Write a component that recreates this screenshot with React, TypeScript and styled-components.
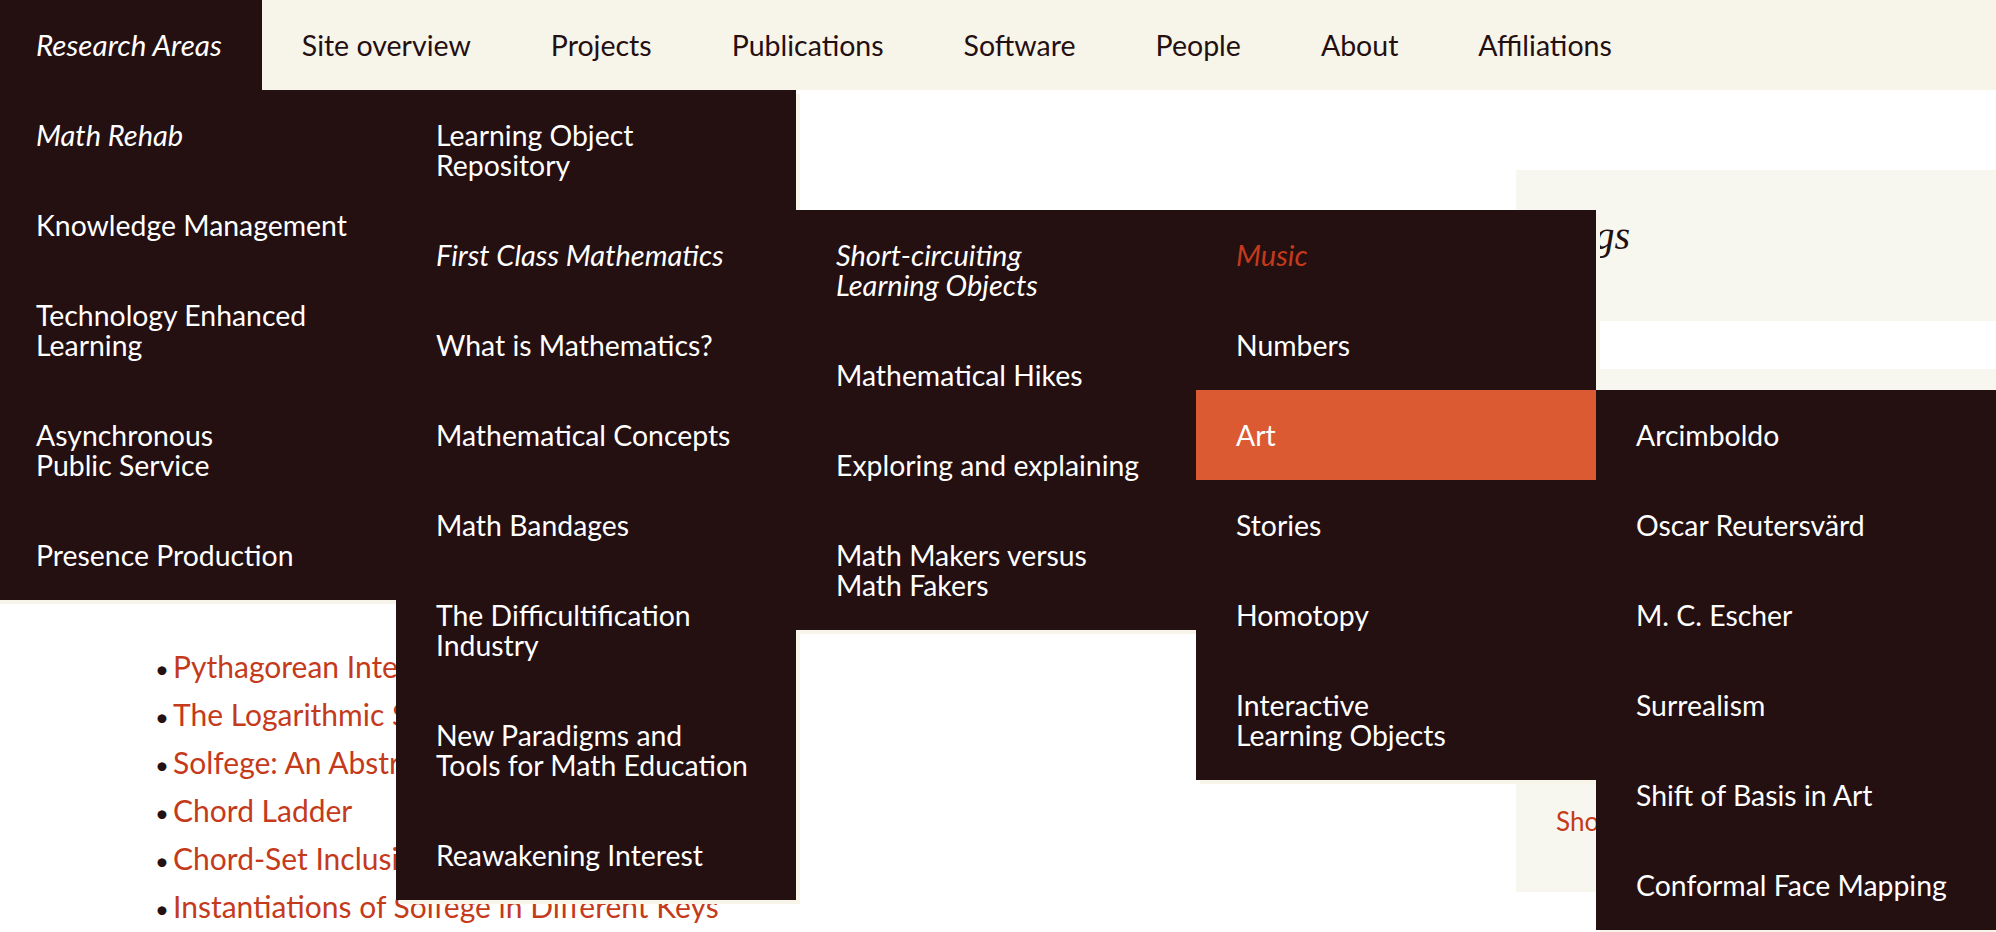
import React from "react";
import styled, { createGlobalStyle } from "styled-components";

const DARK = "#240f11";
const CREAM = "#f7f5ea";
const SIDE_CREAM = "#f8f7ef";
const ORANGE = "#dc5a32";
const LINK = "#c43a1b";

const GlobalStyle = createGlobalStyle`
  html, body {
    margin: 0;
    padding: 0;
    overflow: hidden;
    background: #ffffff;
  }
  body {
    font-family: Lato, "Open Sans", "Noto Sans", sans-serif;
    color: ${DARK};
  }
  * { box-sizing: border-box; }
`;

type Item = {
  label: string[];
  italic?: boolean;
  current?: boolean;
  hover?: boolean;
  children?: Item[];
};

const artItems: Item[] = [
  { label: ["Arcimboldo"] },
  { label: ["Oscar Reutersvärd"] },
  { label: ["M. C. Escher"] },
  { label: ["Surrealism"] },
  { label: ["Shift of Basis in Art"] },
  { label: ["Conformal Face Mapping"] },
];

const shortCircuitItems: Item[] = [
  { label: ["Music"], italic: true, current: true },
  { label: ["Numbers"] },
  { label: ["Art"], hover: true, children: artItems },
  { label: ["Stories"] },
  { label: ["Homotopy"] },
  { label: ["Interactive", "Learning Objects"] },
];

const firstClassItems: Item[] = [
  { label: ["Short-circuiting", "Learning Objects"], italic: true, children: shortCircuitItems },
  { label: ["Mathematical Hikes"] },
  { label: ["Exploring and explaining"] },
  { label: ["Math Makers versus", "Math Fakers"] },
];

const mathRehabItems: Item[] = [
  { label: ["Learning Object", "Repository"] },
  { label: ["First Class Mathematics"], italic: true, children: firstClassItems },
  { label: ["What is Mathematics?"] },
  { label: ["Mathematical Concepts"] },
  { label: ["Math Bandages"] },
  { label: ["The Difficultification", "Industry"] },
  { label: ["New Paradigms and", "Tools for Math Education"] },
  { label: ["Reawakening Interest"] },
];

const researchItems: Item[] = [
  { label: ["Math Rehab"], italic: true, children: mathRehabItems },
  { label: ["Knowledge Management"] },
  { label: ["Technology Enhanced", "Learning"] },
  { label: ["Asynchronous", "Public Service"] },
  { label: ["Presence Production"] },
];

const navItems = [
  "Site overview",
  "Projects",
  "Publications",
  "Software",
  "People",
  "About",
  "Affiliations",
];

const listLinks = [
  "Pythagorean Intervals",
  "The Logarithmic Scale",
  "Solfege: An Abstraction",
  "Chord Ladder",
  "Chord-Set Inclusion",
  "Instantiations of Solfege in Different Keys",
];

/* ---------- Page ---------- */

const Page = styled.div`
  position: relative;
  width: 1996px;
  height: 932px;
  overflow: hidden;
  background: #ffffff;
`;

/* ---------- Navigation ---------- */

const NavBar = styled.nav`
  position: relative;
  z-index: 10;
  height: 90px;
  background: ${CREAM};
`;

const NavList = styled.ul`
  display: flex;
  margin: 0 0 0 -4px;
  padding: 0;
  list-style: none;
  height: 90px;
`;

const NavItem = styled.li<{ $active?: boolean }>`
  position: relative;
  display: block;
  padding: 30px 40px;
  font-size: ${(p) => (p.$active ? "29.6px" : "28.5px")};
  line-height: 30px;
  white-space: nowrap;
  cursor: pointer;
  color: ${(p) => (p.$active ? "#ffffff" : DARK)};
  background: ${(p) => (p.$active ? DARK : "transparent")};
  font-style: ${(p) => (p.$active ? "italic" : "normal")};
`;

const Panel = styled.ul<{ $root?: boolean }>`
  position: absolute;
  top: ${(p) => (p.$root ? "100%" : "0")};
  left: ${(p) => (p.$root ? "0" : "100%")};
  width: 400px;
  margin: 0;
  padding: 0;
  list-style: none;
  font-style: normal;
  background: ${DARK};
  box-shadow: 4px 4px 0 ${CREAM};
`;

const MenuRow = styled.li`
  position: relative;
  display: block;
`;

const MenuLabel = styled.a<{ $italic?: boolean; $current?: boolean; $hover?: boolean }>`
  display: block;
  padding: 30px 40px;
  font-size: ${(p) => (p.$italic ? "29px" : "28.4px")};
  line-height: 30px;
  white-space: nowrap;
  text-decoration: none;
  cursor: pointer;
  font-style: ${(p) => (p.$italic ? "italic" : "normal")};
  color: ${(p) => (p.$current ? LINK : "#ffffff")};
  background: ${(p) => (p.$hover ? ORANGE : "transparent")};
`;

const Menu: React.FC<{ items: Item[]; root?: boolean }> = ({ items, root }) => (
  <Panel $root={root}>
    {items.map((it) => (
      <MenuRow key={it.label.join(" ")}>
        <MenuLabel $italic={it.italic} $current={it.current} $hover={it.hover}>
          {it.label.map((line, i) => (
            <React.Fragment key={i}>
              {i > 0 && <br />}
              {line}
            </React.Fragment>
          ))}
        </MenuLabel>
        {it.children && <Menu items={it.children} />}
      </MenuRow>
    ))}
  </Panel>
);

/* ---------- Content ---------- */

const Body = styled.div`
  display: flex;
  align-items: flex-start;
`;

const Main = styled.main`
  flex: 1;
  padding: 552px 0 0 155px;
`;

const LinkList = styled.ul`
  margin: 0;
  padding: 0;
  list-style: none;
`;

const LinkItem = styled.li`
  display: block;
  height: 48px;
  font-size: 30px;
  line-height: 48px;
  white-space: nowrap;

  &::before {
    content: "•";
    display: inline-block;
    width: 18px;
    font-size: 24px;
    line-height: 1;
    color: ${DARK};
  }
`;

const TextLink = styled.a`
  color: ${LINK};
  text-decoration: none;
`;

const Sidebar = styled.aside`
  width: 480px;
  margin-top: 80px;
  display: flex;
  flex-direction: column;
  gap: 48px;
`;

const HeadingBox = styled.section`
  height: 151px;
  padding: 42px 40px 0;
  background: ${SIDE_CREAM};
`;

const SideHeading = styled.h2`
  margin: 0;
  font-family: "Liberation Serif", "DejaVu Serif", serif;
  font-style: italic;
  font-weight: normal;
  font-size: 40px;
  line-height: 48px;
  color: ${DARK};
`;

const TagBox = styled.section`
  height: 523px;
  padding: 40px 40px 53px;
  background: ${SIDE_CREAM};
  display: flex;
  flex-direction: column;
  justify-content: space-between;
`;

const TagCloud = styled.div`
  display: flex;
  flex-wrap: wrap;
  gap: 8px 16px;
  font-size: 26px;
  line-height: 36px;
`;

const SideLink = styled.a`
  font-size: 26px;
  line-height: 36px;
  color: ${LINK};
  text-decoration: none;
`;

export default function App() {
  return (
    <>
      <GlobalStyle />
      <Page>
        <NavBar>
          <NavList>
            <NavItem $active>
              Research Areas
              <Menu items={researchItems} root />
            </NavItem>
            {navItems.map((n) => (
              <NavItem key={n}>{n}</NavItem>
            ))}
          </NavList>
        </NavBar>
        <Body>
          <Main>
            <LinkList>
              {listLinks.map((l) => (
                <LinkItem key={l}>
                  <TextLink>{l}</TextLink>
                </LinkItem>
              ))}
            </LinkList>
          </Main>
          <Sidebar>
            <HeadingBox>
              <SideHeading>Tags</SideHeading>
            </HeadingBox>
            <TagBox>
              <TagCloud>
                <SideLink>music</SideLink>
                <SideLink>solfege</SideLink>
                <SideLink>intervals</SideLink>
                <SideLink>chords</SideLink>
              </TagCloud>
              <SideLink>Show all tags</SideLink>
            </TagBox>
          </Sidebar>
        </Body>
      </Page>
    </>
  );
}
